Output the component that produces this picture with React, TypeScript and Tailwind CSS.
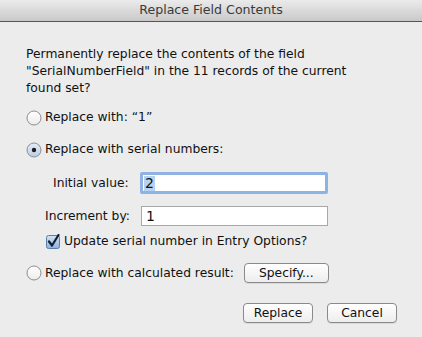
import React from 'react';

const Radio: React.FC<{ checked?: boolean }> = ({ checked }) => (
  <svg width="16" height="16" viewBox="0 0 16 16" className="shrink-0">
    <defs>
      <linearGradient id={checked ? 'rOn' : 'rOff'} x1="0" y1="0" x2="0" y2="1">
        {checked ? (
          <>
            <stop offset="0" stopColor="#e4edf8" />
            <stop offset="1" stopColor="#b9cde6" />
          </>
        ) : (
          <>
            <stop offset="0" stopColor="#ffffff" />
            <stop offset="1" stopColor="#ececec" />
          </>
        )}
      </linearGradient>
    </defs>
    <circle cx="8" cy="8" r="7" fill={`url(#${checked ? 'rOn' : 'rOff'})`} stroke="#8e8e8e" strokeWidth="1" />
    {checked && <circle cx="8" cy="8" r="2.2" fill="#1c1c1c" />}
  </svg>
);

const Checkbox: React.FC = () => (
  <svg width="15" height="15" viewBox="0 0 15 15" className="shrink-0">
    <defs>
      <linearGradient id="cb" x1="0" y1="0" x2="0" y2="1">
        <stop offset="0" stopColor="#d5e3f3" />
        <stop offset="1" stopColor="#8fb1dc" />
      </linearGradient>
    </defs>
    <rect x="0.5" y="1.5" width="13" height="13" rx="2" fill="url(#cb)" stroke="#5d7ea8" />
    <path d="M3 7.5 L6 11.5 L12.5 1" fill="none" stroke="#10203a" strokeWidth="2.2" strokeLinecap="round" strokeLinejoin="round" />
  </svg>
);

const MacButton: React.FC<{ children: React.ReactNode; className?: string }> = ({ children, className }) => (
  <button
    className={`h-[20px] rounded-[4px] border border-[#8a8a8a] bg-gradient-to-b from-white to-[#ededed] text-[12.3px] leading-none text-[#111] shadow-[0_1px_0_rgba(0,0,0,0.08)] ${className ?? ''}`}
  >
    {children}
  </button>
);

export default function App() {
  return (
    <div className="w-[422px] h-[337px] bg-[#ececec] font-['Lucida_Grande','DejaVu_Sans',sans-serif] text-[12.3px] text-[#111] overflow-hidden">
      {/* Title bar */}
      <div className="h-[22px] border-b border-[#555] bg-gradient-to-b from-[#ebebeb] to-[#c9c9c9] flex items-center justify-center">
        <span className="text-[12.6px] text-[#3a3a3a]">Replace Field Contents</span>
      </div>

      <div className="pl-[26px] pr-[20px] pt-[24px]">
        <p className="leading-[17px] w-[330px]">
          Permanently replace the contents of the field "SerialNumberField" in the 11 records of the current found set?
        </p>

        <div className="mt-[12px] flex items-center gap-[3px] h-[17px]">
          <Radio />
          <span>Replace with: “1”</span>
        </div>

        <div className="mt-[15px] flex items-center gap-[3px] h-[17px]">
          <Radio checked />
          <span>Replace with serial numbers:</span>
        </div>

        {/* Initial value */}
        <div className="mt-[14px] flex items-center h-[22px]">
          <span className="ml-[27px] w-[87px]">Initial value:</span>
          <div className="w-[188px] h-[22px] rounded-[2px] border-[3px] border-[#8db2e3] bg-white flex items-center">
            <span className="ml-[1px] bg-[#b5d2f3] px-[1px] leading-[15px] text-[14px]">2</span>
          </div>
        </div>

        {/* Increment by */}
        <div className="mt-[12px] flex items-center h-[20px]">
          <span className="ml-[19px] w-[96px]">Increment by:</span>
          <div className="w-[187px] h-[20px] border border-[#a8a8a8] bg-white flex items-center pl-[4px] text-[14px]">
            1
          </div>
        </div>

        <div className="mt-[7px] flex items-center gap-[3px] ml-[20px] h-[16px]">
          <Checkbox />
          <span>Update serial number in Entry Options?</span>
        </div>

        <div className="mt-[14px] flex items-center h-[20px]">
          <Radio />
          <span className="ml-[3px]">Replace with calculated result:</span>
          <MacButton className="ml-[10px] w-[85px]">Specify...</MacButton>
        </div>

        <div className="mt-[20px] flex justify-end gap-[14px] pr-[5px]">
          <MacButton className="w-[70px]">Replace</MacButton>
          <MacButton className="w-[70px]">Cancel</MacButton>
        </div>
      </div>
    </div>
  );
}
